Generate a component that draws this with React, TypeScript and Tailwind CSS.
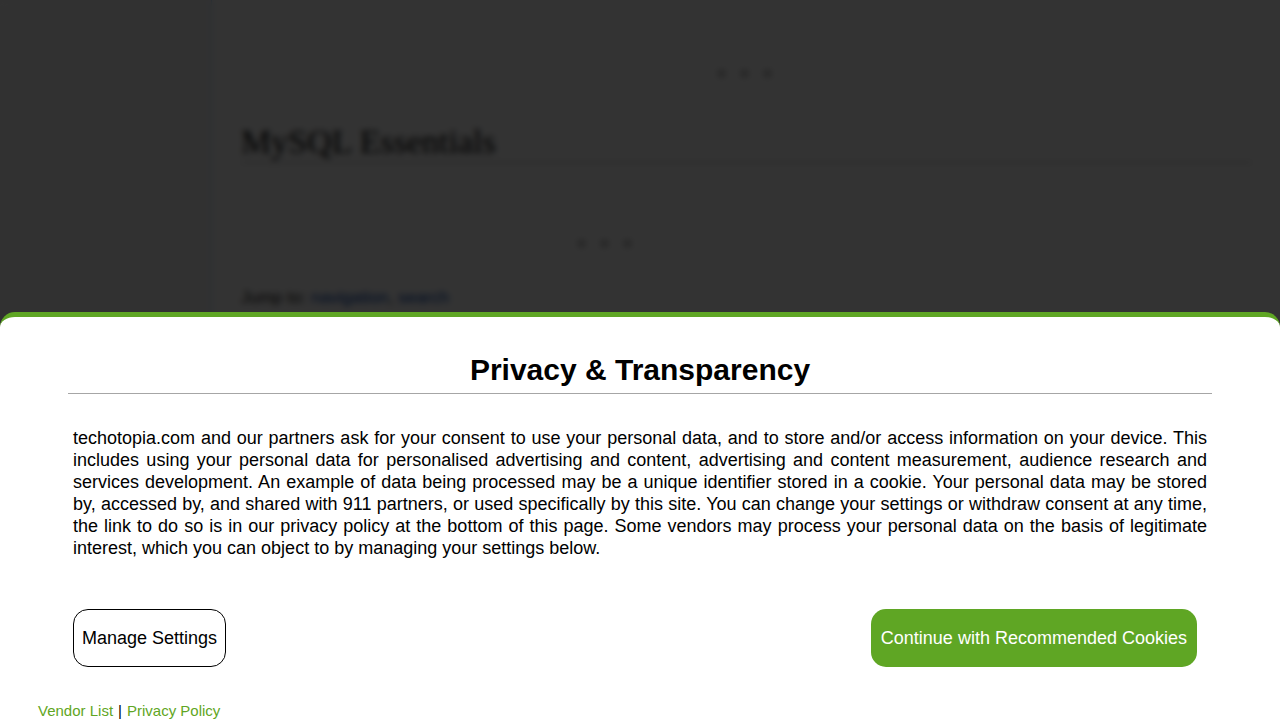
function Dots({ className }: { className: string }) {
  return (
    <div className={`flex h-2 justify-center gap-4 ${className}`} aria-hidden="true">
      <span className="size-[7px] rounded-full bg-[#aaa]" />
      <span className="size-[7px] rounded-full bg-[#aaa]" />
      <span className="size-[7px] rounded-full bg-[#aaa]" />
    </div>
  );
}

function Article() {
  return (
    <div className="flex min-h-screen bg-white">
      <aside className="w-[212px] shrink-0 border-r border-[#aaddff] bg-[#f6f6f6]" />
      <main className="grow pt-[70px] pr-[28px] pl-[29px]">
        <Dots className="mr-1" />
        <h1 className="mt-[44px] border-b border-[#aaa] font-['Liberation_Serif',serif] text-[34px] leading-[40px] font-normal text-black">
          MySQL Essentials
        </h1>
        <Dots className="mt-[77px] mr-[284px]" />
        <p className="mt-[40px] text-[17px] leading-[20px] text-[#222]">
          Jump to:{" "}
          <a href="#navigation" className="text-[#0645ad]">navigation</a>,{" "}
          <a href="#search" className="text-[#0645ad]">search</a>
        </p>
      </main>
    </div>
  );
}

function ConsentDialog() {
  return (
    <section
      role="dialog"
      aria-modal="true"
      aria-labelledby="consent-title"
      className="fixed inset-x-0 bottom-0 rounded-t-[15px] border-t-[5px] border-[#5fa624] bg-white text-black"
    >
      <div className="mx-[68px] border-b border-[#a6a6a6] pt-[35px] pb-[5px]">
        <h2 id="consent-title" className="text-center text-[30px] leading-[36px] font-bold">
          Privacy &amp; Transparency
        </h2>
      </div>
      <div className="mx-[73px] mt-[33px]">
        <p className="text-justify text-[18px] leading-[22px]">
          techotopia.com and our partners ask for your consent to use your personal data, and to store and/or
          access information on your device. This includes using your personal data for personalised advertising
          and content, advertising and content measurement, audience research and services development. An example
          of data being processed may be a unique identifier stored in a cookie. Your personal data may be stored
          by, accessed by, and shared with 911 partners, or used specifically by this site. You can change your
          settings or withdraw consent at any time, the link to do so is in our privacy policy at the bottom of
          this page. Some vendors may process your personal data on the basis of legitimate interest, which you can
          object to by managing your settings below.
        </p>
        <div className="mt-[50px] flex justify-between pr-[10px] text-[18px] leading-[22px]">
          <button type="button" className="h-[58px] rounded-[15px] border border-black bg-white px-2">
            Manage Settings
          </button>
          <button type="button" className="h-[58px] rounded-[15px] bg-[#5fa624] px-[10px] text-white">
            Continue with Recommended Cookies
          </button>
        </div>
      </div>
      <nav className="mt-[35px] ml-[38px] flex gap-[5px] text-[15px] leading-[18px]">
        <a href="#vendors" className="text-[#5fa624]">Vendor List</a>
        <span>|</span>
        <a href="#privacy" className="text-[#5fa624]">Privacy Policy</a>
      </nav>
    </section>
  );
}

export default function App() {
  return (
    <div className="min-h-screen overflow-hidden bg-white font-['Liberation_Sans',Arial,sans-serif]">
      <Article />
      <div className="fixed inset-0 bg-black/80 backdrop-blur-[3px]" />
      <ConsentDialog />
    </div>
  );
}
